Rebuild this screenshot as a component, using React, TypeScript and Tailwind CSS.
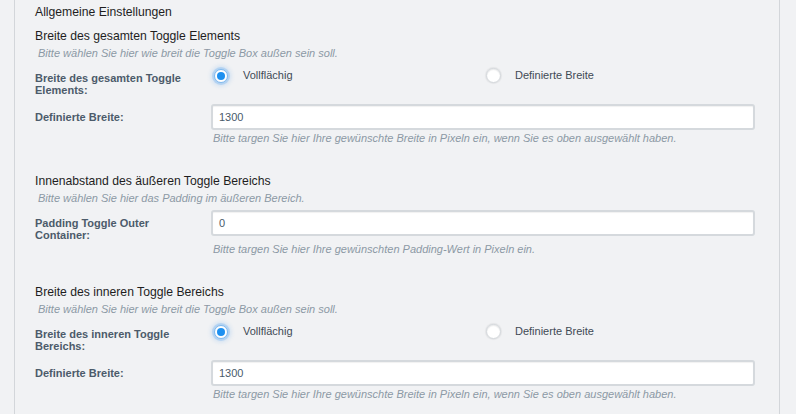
import React from "react";

const font = { fontFamily: '"Liberation Sans", Arial, Helvetica, sans-serif' };

function Radio({ checked }: { checked?: boolean }) {
  if (checked) {
    return (
      <span className="w-[14px] h-[14px] rounded-full bg-white border border-[#7fb8ee] shadow-[0_0_0_2px_rgba(120,180,240,0.35),0_0_4px_3px_rgba(120,180,240,0.3)] flex items-center justify-center shrink-0">
        <span className="w-[8px] h-[8px] rounded-full bg-[#1e90f0]" />
      </span>
    );
  }
  return (
    <span className="w-[15px] h-[15px] rounded-full bg-white border border-[#d4d8dc] shadow-[0_0_1px_1px_rgba(0,0,0,0.06),inset_0_1px_1px_rgba(0,0,0,0.08)] shrink-0" />
  );
}

function Heading({ children, mt }: { children: React.ReactNode; mt: string }) {
  return <div className={`${mt} h-[16px] leading-[16px] text-[12.2px] text-[#1e1e1e]`}>{children}</div>;
}

function Hint({ children }: { children: React.ReactNode }) {
  return <div className="mt-[2px] h-[14px] leading-[14px] text-[11px] italic text-[#8c99a5] pl-[3px]">{children}</div>;
}

function Label({ children, pt }: { children: React.ReactNode; pt: string }) {
  return (
    <div className={`w-[176px] shrink-0 ${pt} text-[11px] leading-[12px] font-bold text-[#4c5b6a]`}>{children}</div>
  );
}

function RadioRow({ label }: { label: React.ReactNode }) {
  return (
    <div className="mt-[6px] flex h-[30px]">
      <Label pt="pt-[6px]">{label}</Label>
      <div className="flex-1 flex mr-[24px]">
        <div className="w-1/2 h-[19px] flex items-center pl-[3px]">
          <Radio checked />
          <span className="ml-[15px] text-[11px] text-[#3f4a55]">Vollflächig</span>
        </div>
        <div className="w-1/2 h-[19px] flex items-center pl-[3px]">
          <Radio />
          <span className="ml-[14px] text-[11px] text-[#3f4a55]">Definierte Breite</span>
        </div>
      </div>
    </div>
  );
}

function InputRow({ label, value, mt, hint }: { label: React.ReactNode; value: string; mt: string; hint: string }) {
  return (
    <>
      <div className={`${mt} flex`}>
        <Label pt="pt-[7px]">{label}</Label>
        <div className="flex-1 mr-[24px]">
          <div className="h-[26px] bg-white border-2 border-[#d5d9dd] rounded-[3px] shadow-[inset_0_1px_1px_rgba(0,0,0,0.06)] flex items-center pl-[6px] text-[11px] text-[#4a5a6a]">
            {value}
          </div>
        </div>
      </div>
      <div className="flex mt-[1px]">
        <div className="w-[176px] shrink-0" />
        <div className="pl-[2px] h-[14px] leading-[14px] text-[11px] italic text-[#8c99a5]">{hint}</div>
      </div>
    </>
  );
}

export default function App() {
  return (
    <div className="w-[796px] h-[414px] bg-[#f1f2f4] overflow-hidden" style={font}>
      <div className="ml-[14px] w-[766px] h-full border-l border-r border-[#d3d6da] pl-[20px] pt-[4px]">
        <Heading mt="mt-0">Allgemeine Einstellungen</Heading>

        <Heading mt="mt-[8px]">Breite des gesamten Toggle Elements</Heading>
        <Hint>Bitte wählen Sie hier wie breit die Toggle Box außen sein soll.</Hint>
        <RadioRow label={<>Breite des gesamten Toggle<br />Elements:</>} />
        <InputRow
          mt="mt-[8px]"
          label="Definierte Breite:"
          value="1300"
          hint="Bitte targen Sie hier Ihre gewünschte Breite in Pixeln ein, wenn Sie es oben ausgewählt haben."
        />

        <Heading mt="mt-[28px]">Innenabstand des äußeren Toggle Bereichs</Heading>
        <Hint>Bitte wählen Sie hier das Padding im äußeren Bereich.</Hint>
        <InputRow
          mt="mt-[5px]"
          label={<>Padding Toggle Outer<br />Container:</>}
          value="0"
          hint="Bitte targen Sie hier Ihre gewünschten Padding-Wert in Pixeln ein."
        />

        <Heading mt="mt-[28px]">Breite des inneren Toggle Bereichs</Heading>
        <Hint>Bitte wählen Sie hier wie breit die Toggle Box außen sein soll.</Hint>
        <RadioRow label={<>Breite des inneren Toggle<br />Bereichs:</>} />
        <InputRow
          mt="mt-[8px]"
          label="Definierte Breite:"
          value="1300"
          hint="Bitte targen Sie hier Ihre gewünschte Breite in Pixeln ein, wenn Sie es oben ausgewählt haben."
        />
      </div>
    </div>
  );
}
